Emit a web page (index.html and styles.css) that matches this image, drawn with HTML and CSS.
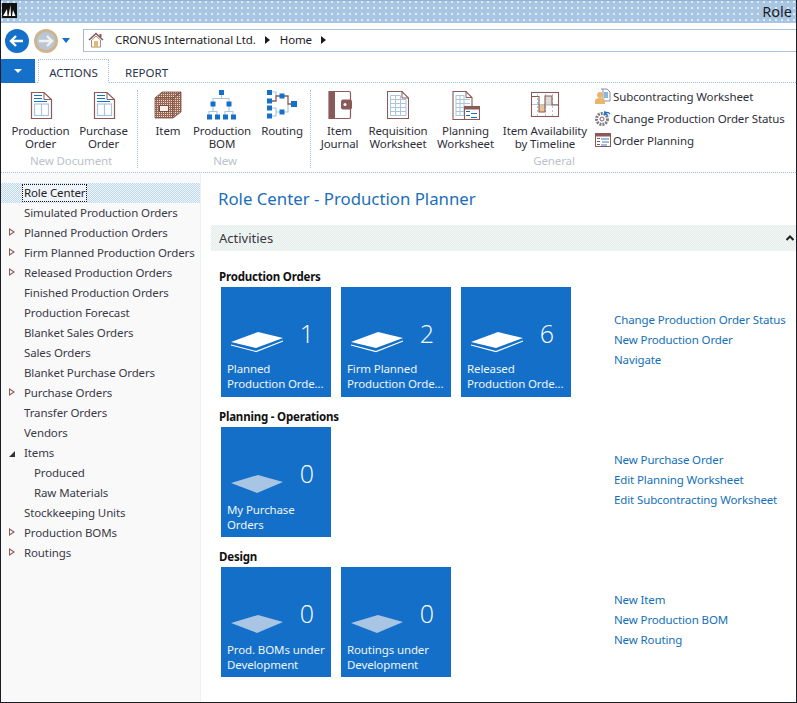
FILE: index.html
```html
<!DOCTYPE html>
<html lang="en">
<head>
<meta charset="utf-8">
<title>Role Center</title>
<link rel="stylesheet" href="styles.css">
</head>
<body>
<div class="window">
  <header class="titlebar">
    <div class="logo"><svg width="15" height="15" viewBox="0 0 15 15"><rect width="15" height="15" fill="#111"/><path d="M1 13 L5 6 L5.500 13 Z M6.500 13 L8.500 2 L9 13 Z M10 13 L11 7 L13.500 13 Z" fill="#fff"/></svg></div>
    <div class="title-text">Role</div>
  </header>

  <div class="navbar">
    <svg class="nav-back" width="24" height="24" viewBox="0 0 24 24"><circle cx="12" cy="12" r="12" fill="#1470c8"/><path d="M6 12 H18 M11 7 L6 12 L11 17" fill="none" stroke="#fff" stroke-width="2.4"/></svg>
    <svg class="nav-fwd" width="24" height="24" viewBox="0 0 24 24"><circle cx="12" cy="12" r="12" fill="#cdb68f"/><circle cx="12" cy="12" r="9" fill="#b9c6d6"/><path d="M5 12 H18 M13 7 L18 12 L13 17" fill="none" stroke="#f1f1ee" stroke-width="2.4"/></svg>
    <svg class="nav-drop" width="8" height="5" viewBox="0 0 8 5"><path d="M0 0 H8 L4 5 Z" fill="#1470c8"/></svg>
    <div class="address">
      <svg class="home" width="16" height="16" viewBox="0 0 16 16"><path d="M1 8 L8 1.500 L15 8" fill="none" stroke="#8a5a5a" stroke-width="1.600"/><path d="M3.500 8 V15 H12.500 V8 L8 4 Z" fill="#fff" stroke="#a98a80"/><rect x="6" y="9" width="4" height="6" fill="#e8b66c"/><rect x="11.500" y="2" width="2" height="3" fill="#8a5a5a"/></svg>
      <span class="crumb">CRONUS International Ltd.</span><span class="sep"></span>
      <span class="crumb">Home</span><span class="sep"></span>
    </div>
  </div>

  <div class="tabs">
    <div class="app-btn"><span class="app-caret"></span></div>
    <div class="tab tab-active">ACTIONS</div>
    <div class="tab">REPORT</div>
  </div>

  <section class="ribbon">
    <div class="group group-doc">
      <div class="group-items">
        <div class="rb w63"><svg class="ic" width="24" height="30" viewBox="0 0 24 30"><use href="#doc"/></svg><span>Production<br>Order</span></div>
        <div class="rb w63"><svg class="ic" width="24" height="30" viewBox="0 0 24 30"><use href="#doc"/></svg><span>Purchase<br>Order</span></div>
      </div>
      <div class="group-label">New Document</div>
    </div>
    <div class="group group-new">
      <div class="group-items">
        <div class="rb w56"><svg class="ic" width="30" height="30" viewBox="0 0 30 30"><path d="M2 8 L9 2 H28 V22 L20 28 H2 Z" fill="url(#brick)" stroke="#7a4a44" stroke-width=".8"/><path d="M2 8 H20 V28 M20 8 L28 2" fill="none" stroke="#6d433d" stroke-width=".8"/><rect x="6.500" y="15.500" width="9" height="6" fill="#f6f1ea" stroke="#7a4a44"/></svg><span>Item</span></div>
        <div class="rb w52"><svg class="ic" width="30" height="30" viewBox="0 0 30 30"><path d="M14.500 4 V8.500 H6 V12 M14.500 8.500 H22 V12 M6 16 V21.500 H2 V25 M6 21.500 H10 V25 M22 16 V21.500 H18 V25 M22 21.500 H26 V25" fill="none" stroke="#a9c5df" stroke-width="1.100"/><g fill="#1470c8"><rect x="12" y="0" width="5" height="5"/><rect x="3.500" y="11.500" width="5" height="5"/><rect x="19.500" y="11.500" width="5" height="5"/><rect x="0" y="24.500" width="5" height="5"/><rect x="8" y="24.500" width="5" height="5"/><rect x="16" y="24.500" width="5" height="5"/><rect x="24" y="24.500" width="5" height="5"/></g></svg><span>Production<br>BOM</span></div>
        <div class="rb w60 shift4"><svg class="ic" width="30" height="30" viewBox="0 0 30 30"><path d="M2 2 H9 V6 M2 18 H9 V22 H15 M2 26 H9 V22 M15 22 H21 V14" fill="none" stroke="#a9c5df" stroke-width="1.200"/><path d="M2 11 H9 V6 H15 H21 V14 H27" fill="none" stroke="#8a5a5a" stroke-width="1.300"/><g fill="#1470c8"><rect x="0" y="0" width="5" height="5"/><rect x="0" y="8.500" width="5" height="5"/><rect x="0" y="15.500" width="5" height="5"/><rect x="0" y="23.500" width="5" height="5"/><rect x="12.500" y="3.500" width="5" height="5"/><rect x="12.500" y="19.500" width="5" height="5"/><rect x="24" y="11" width="6" height="6"/></g></svg><span>Routing</span></div>
      </div>
      <div class="group-label">New</div>
    </div>
    <div class="group group-general">
      <div class="group-items">
        <div class="rb w55"><svg class="ic" width="24" height="30" viewBox="0 0 24 30"><path d="M1 1.500 H21 Q22.500 1.500 22.500 3 V27 Q22.500 28.500 21 28.500 H1 Z" fill="#fff" stroke="#8a5a5a" stroke-width="1.200"/><rect x="1" y="1" width="6" height="28" fill="#8a5a5a"/><rect x="13" y="9.500" width="11" height="10" rx="2" fill="#8a5a5a"/><circle cx="17" cy="14.500" r="1.500" fill="#fff"/></svg><span>Item<br>Journal</span></div>
        <div class="rb w62"><svg class="ic" width="22" height="30" viewBox="0 0 22 30"><path d="M.5 1.500 H15 L21.500 8 V28.500 H.5 Z" fill="#fff" stroke="#8a5a5a" stroke-width="1.100"/><path d="M15 1.500 V8 H21.500" fill="none" stroke="#8a5a5a"/><path d="M3.500 5.500 H13 M3.500 9.500 H19 M3.500 13.500 H19 M3.500 17.500 H19 M3.500 21.500 H19 M3.500 25.500 H19 M3.500 5.500 V26 M8.500 5.500 V26 M13.500 5.500 V26 M19 9.500 V26" fill="none" stroke="#a9c5df"/></svg><span>Requisition<br>Worksheet</span></div>
        <div class="rb w73"><svg class="ic" width="28" height="30" viewBox="0 0 28 30"><path d="M1 1.500 H14 L20 7.500 V29.500 H1 Z" fill="#fff" stroke="#8a5a5a" stroke-width="1.100"/><path d="M14 1.500 V7.500 H20" fill="none" stroke="#8a5a5a"/><path d="M4 5.500 H12 M4 9.500 H18 M4 13.500 H18 M4 17.500 H18 M4 21.500 H12 M4 25.500 H12 M4 5.500 V26 M8 5.500 V26 M12 5.500 V26" fill="none" stroke="#a9c5df"/><rect x="12.500" y="16.500" width="15" height="13" fill="#fff" stroke="#8a5a5a" stroke-width="1.100"/><rect x="12.500" y="16.500" width="15" height="3" fill="#8a5a5a"/><path d="M14 21.500 H18 M19 23.500 H25 M14 25.500 H18 M19 27.500 H25" stroke="#1470c8"/></svg><span>Planning<br>Worksheet</span></div>
        <div class="rb w86"><svg class="ic" width="30" height="30" viewBox="0 0 30 30"><rect x="1.500" y="2.500" width="27" height="24" fill="#fff" stroke="#8a5a5a" stroke-width="1.100"/><rect x="15" y="6" width="7" height="10" fill="#dcdcd4"/><rect x="9" y="15" width="6" height="7" fill="#e8c394"/><path d="M2 14.500 H28" stroke="#a9c5df"/><path d="M7.500 4 V26 M15.500 4 V26 M22.500 4 V26" stroke="#a9c5df" stroke-dasharray="2 2"/><path d="M2 6.500 H9 V22 H15 V6 H22 V15 H28" fill="none" stroke="#8a5a5a" stroke-width="1.100"/></svg><span>Item Availability<br>by Timeline</span></div>
        <div class="small-list">
          <div class="small-item"><svg width="16" height="16" viewBox="0 0 16 16"><path d="M6 1 H12 L15 4 V13 H8 V1" fill="#fff" stroke="#8a8fa8"/><path d="M9 5 H13 M9 7 H13 M9 9 H13" stroke="#1470c8"/><circle cx="5" cy="7" r="3" fill="#eab56c"/><path d="M0 16 V13 Q0 10 5 10 Q10 10 10 13 V16 Z" fill="#eab56c"/></svg><span>Subcontracting Worksheet</span></div>
          <div class="small-item"><svg width="16" height="16" viewBox="0 0 16 16"><circle cx="7" cy="9" r="5.500" fill="none" stroke="#7d7d8a" stroke-width="3" stroke-dasharray="2 1"/><circle cx="7" cy="9" r="2" fill="#fff" stroke="#8a5a5a"/><path d="M10 3 A4 4 0 0 1 15 4 M10 1 L9.500 4 L12.500 4.500" fill="none" stroke="#1470c8" stroke-width="1.300"/></svg><span>Change Production Order Status</span></div>
          <div class="small-item"><svg width="16" height="16" viewBox="0 0 16 16"><rect x=".5" y="1.500" width="15" height="13" fill="#fff" stroke="#8a5a5a"/><rect x=".5" y="1.500" width="15" height="3" fill="#8a5a5a"/><path d="M2 6.500 H5 M2 9.500 H5 M2 12.500 H5" stroke="#8a5a5a"/><path d="M6 7 H14 M7 10 H14 M6 13 H12" stroke="#7fa9d4" stroke-width="1.400"/></svg><span>Order Planning</span></div>
        </div>
      </div>
      <div class="group-label">General</div>
    </div>
  </section>

  <div class="content">
    <nav class="sidenav">
      <div class="nv nv-selected"><span class="focus">Role Center</span></div>
      <div class="nv">Simulated Production Orders</div>
      <div class="nv has-kids">Planned Production Orders</div>
      <div class="nv has-kids">Firm Planned Production Orders</div>
      <div class="nv has-kids">Released Production Orders</div>
      <div class="nv">Finished Production Orders</div>
      <div class="nv">Production Forecast</div>
      <div class="nv">Blanket Sales Orders</div>
      <div class="nv">Sales Orders</div>
      <div class="nv">Blanket Purchase Orders</div>
      <div class="nv has-kids">Purchase Orders</div>
      <div class="nv">Transfer Orders</div>
      <div class="nv">Vendors</div>
      <div class="nv is-open">Items</div>
      <div class="nv nv-sub">Produced</div>
      <div class="nv nv-sub">Raw Materials</div>
      <div class="nv">Stockkeeping Units</div>
      <div class="nv has-kids">Production BOMs</div>
      <div class="nv has-kids">Routings</div>
    </nav>
    <main class="main">
      <h1 class="page-title">Role Center - Production Planner</h1>
      <div class="part-head"><span>Activities</span><svg width="8" height="6" viewBox="0 0 8 6"><path d="M.5 5 L4 1.500 L7.500 5" fill="none" stroke="#222" stroke-width="2"/></svg></div>

      <section class="cue-group">
        <div>
          <h2 class="cue-title">Production Orders</h2>
          <div class="tiles">
            <div class="tile"><div class="tile-top"><svg class="stack" width="54" height="21" viewBox="0 0 54 21"><use href="#stack"/></svg><span class="num">1</span></div><div class="tile-label">Planned<br>Production Orde...</div></div>
            <div class="tile"><div class="tile-top"><svg class="stack" width="54" height="21" viewBox="0 0 54 21"><use href="#stack"/></svg><span class="num">2</span></div><div class="tile-label">Firm Planned<br>Production Orde...</div></div>
            <div class="tile"><div class="tile-top"><svg class="stack" width="54" height="21" viewBox="0 0 54 21"><use href="#stack"/></svg><span class="num">6</span></div><div class="tile-label">Released<br>Production Orde...</div></div>
          </div>
        </div>
        <div class="links"><a>Change Production Order Status</a><a>New Production Order</a><a>Navigate</a></div>
      </section>

      <section class="cue-group">
        <div>
          <h2 class="cue-title">Planning - Operations</h2>
          <div class="tiles">
            <div class="tile tile-zero"><div class="tile-top"><svg class="stack" width="54" height="22" viewBox="0 0 54 22"><use href="#empty"/></svg><span class="num">0</span></div><div class="tile-label">My Purchase<br>Orders</div></div>
          </div>
        </div>
        <div class="links"><a>New Purchase Order</a><a>Edit Planning Worksheet</a><a>Edit Subcontracting Worksheet</a></div>
      </section>

      <section class="cue-group">
        <div>
          <h2 class="cue-title">Design</h2>
          <div class="tiles">
            <div class="tile tile-zero"><div class="tile-top"><svg class="stack" width="54" height="22" viewBox="0 0 54 22"><use href="#empty"/></svg><span class="num">0</span></div><div class="tile-label">Prod. BOMs under<br>Development</div></div>
            <div class="tile tile-zero"><div class="tile-top"><svg class="stack" width="54" height="22" viewBox="0 0 54 22"><use href="#empty"/></svg><span class="num">0</span></div><div class="tile-label">Routings under<br>Development</div></div>
          </div>
        </div>
        <div class="links"><a>New Item</a><a>New Production BOM</a><a>New Routing</a></div>
      </section>
    </main>
  </div>
</div>

<svg class="defs" width="0" height="0">
  <defs>
    <pattern id="brick" width="2" height="2" patternUnits="userSpaceOnUse"><rect width="2" height="2" fill="#96665a"/><rect width="1" height="1" fill="#f0d9b8"/></pattern>
    <g id="doc">
      <path d="M2.500 2.500 H15 L22.500 9.500 V28.500 H2.500 Z" fill="#fff" stroke="#8a5a5a" stroke-width="1.200"/>
      <path d="M15 2.500 V9.500 H22.500" fill="none" stroke="#8a5a5a"/>
      <path d="M5 5.500 H13 M5 8.500 H13 M5 11.500 H18" stroke="#1470c8" stroke-width="1.100"/>
      <rect x="5.500" y="14" width="14" height="11.500" fill="#fff" stroke="#a9c5df" stroke-width="1.200"/>
      <path d="M12.500 14 V25.500" stroke="#a9c5df" stroke-width="1.200"/>
    </g>
    <g id="stack">
      <path d="M1 10 L28 0 L53 6 L26 16 Z" fill="#fff"/>
      <path d="M1 13 L26 19.500 L53 9" fill="none" stroke="#fff" stroke-width="1.200"/>
    </g>
    <g id="empty">
      <path d="M1 11 L28 3 L53 10 L27 21 Z" fill="#a9c5e4"/>
    </g>
  </defs>
</svg>
</body>
</html>
```
FILE: styles.css
```css
* { box-sizing: border-box; }
html, body { margin: 0; padding: 0; background: #fff; }
body { font-family: "Noto Sans", "Open Sans", sans-serif; font-size: 11.5px; letter-spacing: -0.12px; color: #2f2f3a; }
.window { width: 797px; height: 703px; display: flex; flex-direction: column; border-left: 1px solid #1c1c24; border-right: 1px solid #1c1c24; border-bottom: 1px solid #1c1c24; overflow: hidden; }

.titlebar { height: 23px; flex: none; display: flex; justify-content: space-between; align-items: flex-start; background-color: #a8c5e2; background-image: radial-gradient(circle at 1px 1px, #e4edf6 .7px, transparent .8px); background-size: 6px 6px; border-top: 1px solid #93b3d6; }
.logo { height: 15px; margin-left: 1px; margin-top: 2px; }
.title-text { font-size: 14.5px; letter-spacing: 0; line-height: 20px; margin-right: 4px; color: #1c1c24; }

.navbar { height: 36px; flex: none; display: flex; align-items: center; padding: 0 0 1px 4px; }
.nav-back { margin-right: 5px; }
.nav-fwd { margin-right: 4px; }
.nav-drop { margin-right: 13px; }
.address { flex: 1; height: 23px; border: 1px solid #aac4de; border-left-color: #aeb0d2; border-right: none; display: flex; align-items: center; padding: 0 0 2px 4px; color: #1c1c24; }
.home { margin-right: 11px; }
.sep { width: 0; height: 0; border-left: 5px solid #1c1c24; border-top: 4px solid transparent; border-bottom: 4px solid transparent; margin: 0 10px 0 9px; }

.tabs { height: 24px; flex: none; display: flex; align-items: stretch; border-bottom: 1px dotted #9cc0e0; }
.app-btn { width: 34px; background: #1470c8; margin-bottom: -1px; display: flex; align-items: center; justify-content: center; }
.app-caret { width: 0; height: 0; border-top: 4px solid #fff; border-left: 4px solid transparent; border-right: 4px solid transparent; }
.tab { padding: 5px 0 0; line-height: 18px; letter-spacing: 0; color: #2a3350; }
.tab-active { width: 71px; margin-left: 3px; text-align: center; border: 1px dotted #9cc0e0; border-bottom: 1px solid #fff; margin-bottom: -1px; background: #fff; padding-top: 4px; }
.tab-active + .tab { margin-left: 16px; }

.ribbon { height: 90px; flex: none; display: flex; border-bottom: 1px dotted #9cc0e0; padding-top: 7px; }
.group { display: flex; flex-direction: column; margin-bottom: 4px; }
.group-doc { width: 137px; flex: none; padding-left: 8px; border-right: 1px dotted #9cc0e0; }
.group-new { width: 173px; flex: none; padding-left: 2px; border-right: 1px dotted #9cc0e0; }
.group-general { flex: 1; padding-left: 1px; }
.group-items { display: flex; flex: 1; }
.rb { flex: none; display: flex; flex-direction: column; align-items: center; text-align: center; white-space: nowrap; line-height: 13px; color: #2f2f3a; }
.rb .ic { margin-bottom: 4px; display: block; }
.rb span { display: block; }
.w52 { width: 52px; }
.w55 { width: 55px; }
.w56 { width: 56px; }
.w60 { width: 60px; }
.w62 { width: 62px; }
.w63 { width: 63px; }
.w73 { width: 73px; }
.w86 { width: 86px; }
.shift4 { margin-left: 4px; }
.group-label { text-align: center; color: #b8c3cc; line-height: 14px; height: 14px; }
.group-doc .group-label { padding-right: 4px; }
.small-list { margin-left: 7px; margin-top: -5px; display: flex; flex-direction: column; }
.small-item { display: flex; align-items: center; gap: 2px; height: 22px; white-space: nowrap; }

.content { flex: 1; display: flex; min-height: 0; }
.sidenav { width: 200px; flex: none; background: #f9f9f9; border-right: 1px solid #eef3f2; padding-top: 10px; }
.nv { height: 20px; line-height: 20px; padding-left: 23px; position: relative; white-space: nowrap; color: #3a3a48; }
.nv-selected { background: repeating-conic-gradient(#bcd7ee 0 25%, #f0f6fb 0 50%) 0 0 / 2px 2px; padding-left: 21px; }
.focus { display: inline-block; height: 18px; line-height: 16px; padding: 0 1px; margin-top: 1px; border: 1px dotted #111; background: #eef4fa; color: #222; vertical-align: top; }
.nv-sub { padding-left: 33px; }
.has-kids::before { content: ""; position: absolute; left: 8px; top: 5px; width: 0; height: 0; border-left: 6px solid #8a5a5a; border-top: 4.500px solid transparent; border-bottom: 4.500px solid transparent; }
.has-kids::after { content: ""; position: absolute; left: 9px; top: 7px; width: 0; height: 0; border-left: 3px solid #f9f9f9; border-top: 2.500px solid transparent; border-bottom: 2.500px solid transparent; }
.is-open::before { content: ""; position: absolute; left: 8px; top: 8px; width: 0; height: 0; border-bottom: 6px solid #333; border-left: 6px solid transparent; }

.main { flex: 1; padding-left: 10px; min-width: 0; }
.page-title { margin: 0 0 0 7px; height: 52px; padding-top: 14px; font-size: 16.8px; letter-spacing: 0; line-height: 24px; font-weight: 400; color: #1b6fb8; }
.part-head { height: 26px; display: flex; align-items: center; justify-content: space-between; padding: 0 2px 0 8px; background: repeating-conic-gradient(#e6eeec 0 25%, #f2f6f4 0 50%) 0 0 / 2px 2px; font-size: 13px; letter-spacing: 0; color: #38383f; }
.cue-group { display: flex; margin-left: 8px; }
.cue-group:first-of-type { margin-top: 16px; }
.cue-group > div:first-child { width: 395px; height: 140px; }
.cue-title { margin: 0; height: 20px; line-height: 20px; font-size: 11.5px; letter-spacing: -0.2px; font-weight: 700; color: #111; }
.tiles { display: flex; gap: 10px; padding-left: 2px; }
.tile { width: 110px; height: 110px; background: #136fc7; color: #eef4fb; padding: 45px 0 0 6px; }
.tile-top { height: 27px; position: relative; display: flex; justify-content: space-between; }
.stack { margin-left: 3px; }
.num { position: absolute; right: 17px; top: -14px; font-family: "Open Sans", sans-serif; font-size: 25px; font-weight: 300; letter-spacing: 0; line-height: 30px; color: #fff; }
.tile-label { line-height: 15px; white-space: nowrap; margin-top: 2px; }
.tile-zero .tile-label { margin-top: 3px; }
.links { display: flex; flex-direction: column; padding-top: 43px; }
.links a { height: 20px; line-height: 20px; color: #1470b8; white-space: nowrap; }
.defs { position: absolute; }
```
